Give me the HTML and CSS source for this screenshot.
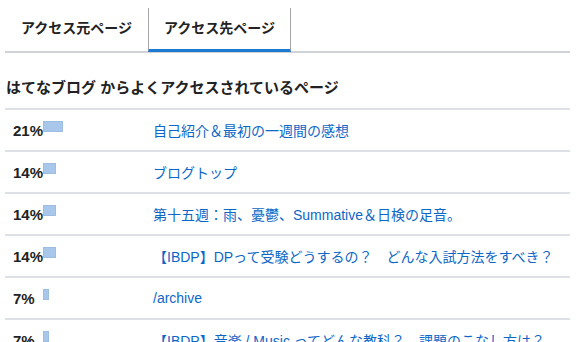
FILE: index.html
```html
<!DOCTYPE html>
<html lang="ja">
<head>
    <meta charset="UTF-8">
    <meta name="viewport" content="width=device-width, initial-scale=1.0">
    <title>アクセス先ページ</title>
    <link rel="stylesheet" href="styles.css">
</head>
<body>
    <div class="access-box">
        <ul class="tabs">
            <li class="tab">アクセス元ページ</li>
            <li class="tab active">アクセス先ページ</li>
        </ul>
        <h2 class="section-title">はてなブログ からよくアクセスされているページ</h2>
        <div class="page-list">
            <div class="page-row">
                <div class="rate"><span class="pct">21%</span><span class="bar" style="width: 20px"></span></div>
                <a class="page-link" href="#">自己紹介＆最初の一週間の感想</a>
            </div>
            <div class="page-row">
                <div class="rate"><span class="pct">14%</span><span class="bar" style="width: 13px"></span></div>
                <a class="page-link" href="#">ブログトップ</a>
            </div>
            <div class="page-row">
                <div class="rate"><span class="pct">14%</span><span class="bar" style="width: 13px"></span></div>
                <a class="page-link" href="#">第十五週：雨、憂鬱、Summative＆日検の足音。</a>
            </div>
            <div class="page-row">
                <div class="rate"><span class="pct">14%</span><span class="bar" style="width: 13px"></span></div>
                <a class="page-link" href="#">【IBDP】DPって受験どうするの？　どんな入試方法をすべき？</a>
            </div>
            <div class="page-row">
                <div class="rate"><span class="pct">7%</span><span class="bar" style="width: 6px"></span></div>
                <a class="page-link" href="#">/archive</a>
            </div>
            <div class="page-row">
                <div class="rate"><span class="pct">7%</span><span class="bar" style="width: 6px"></span></div>
                <a class="page-link" href="#">【IBDP】音楽 / Music ってどんな教科？　課題のこなし方は？</a>
            </div>
        </div>
    </div>
</body>
</html>
```

FILE: styles.css
```css
body {
    margin: 0;
    font-family: "Liberation Sans", "Noto Sans CJK JP", sans-serif;
    color: #222;
    background: #fff;
}
.access-box {
    width: 565px;
    margin-left: 5px;
    padding-top: 8px;
}
.tabs {
    display: flex;
    list-style: none;
    margin: 0;
    padding: 0;
    height: 43px;
    border-bottom: 2px solid #cfd3d7;
}
.tab {
    height: 41px;
    line-height: 41px;
    padding: 0 15px;
    font-size: 14px;
    font-weight: bold;
    border-left: 1px solid transparent;
    border-right: 1px solid transparent;
    border-bottom: 3px solid transparent;
    white-space: nowrap;
}
.tab.active {
    border-left-color: #a6a6a6;
    border-right-color: #a6a6a6;
    border-bottom-color: #1d7ad3;
    background: #fff;
}
.section-title {
    margin: 24px 0 9px 1px;
    font-size: 15px;
    line-height: 22px;
    font-weight: bold;
    white-space: nowrap;
}
.page-list {
    border-top: 2px solid #dde1e5;
}
.page-row {
    display: grid;
    grid-template-columns: 148px 1fr;
    align-items: center;
    height: 40px;
    border-bottom: 2px solid #dde1e5;
    white-space: nowrap;
}
.rate {
    padding-left: 8px;
    font-size: 15px;
    font-weight: bold;
}
.pct {
    display: inline-block;
    min-width: 30px;
}
.bar {
    display: inline-block;
    height: 11px;
    vertical-align: 4px;
    background: #a8c7ea;
    box-shadow: inset 0 0 0 1px #9dbde3;
}
.page-link {
    font-size: 14px;
    color: #0d67c6;
    text-decoration: none;
}
```
